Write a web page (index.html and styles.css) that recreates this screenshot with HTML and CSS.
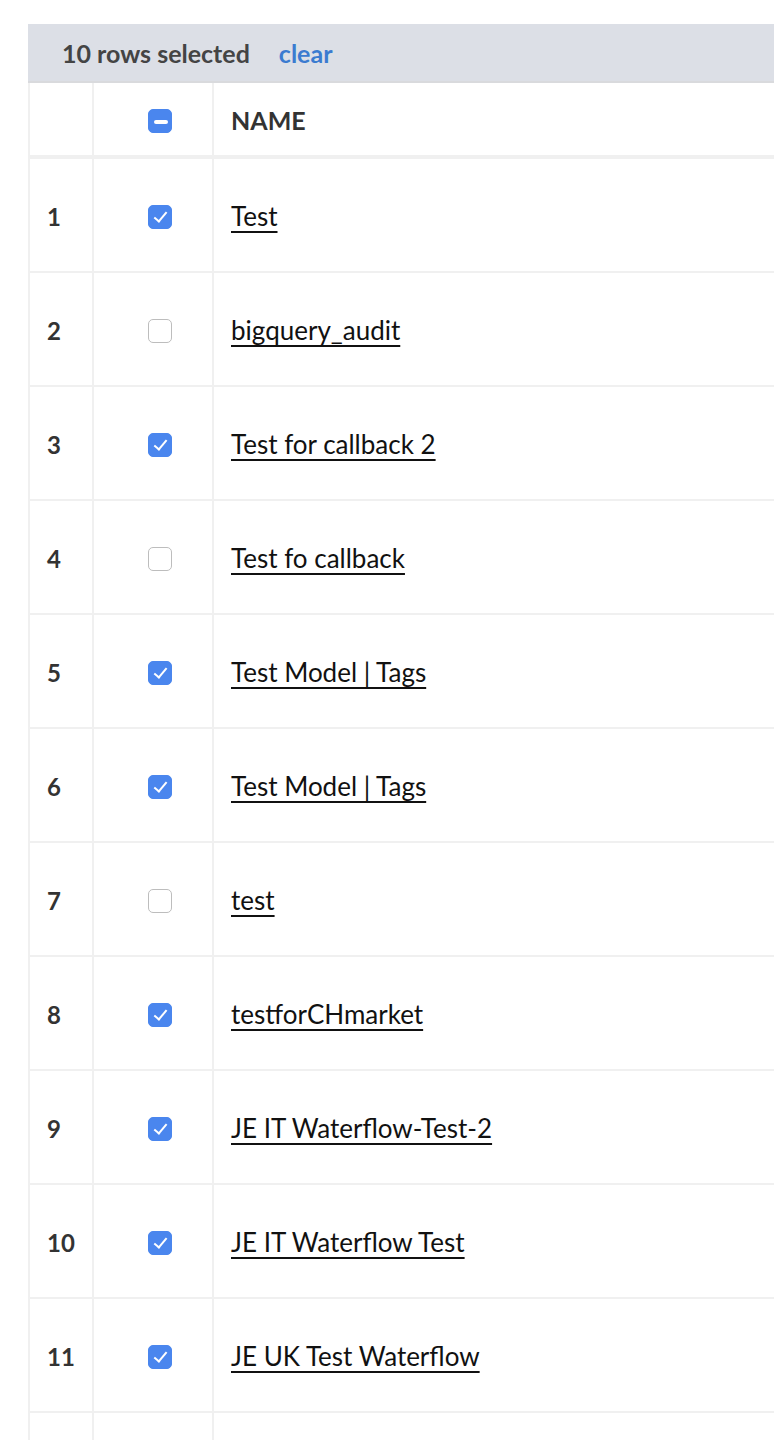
FILE: index.html
```html
<!DOCTYPE html>
<html>
<head>
<meta charset="utf-8">
<link rel="stylesheet" href="styles.css">
</head>
<body>
<div class="wrap">
  <div class="bar">
    <span class="count">10 rows selected</span>
    <a class="clear">clear</a>
  </div>
  <div class="table">
    <div class="row head">
      <div class="c num"></div>
      <div class="c chk"><span class="box partial"></span></div>
      <div class="c name"><span class="th">NAME</span></div>
    </div>
    <div class="row"><div class="c num">1</div><div class="c chk"><span class="box on"></span></div><div class="c name"><a>Test</a></div></div>
    <div class="row"><div class="c num">2</div><div class="c chk"><span class="box"></span></div><div class="c name"><a>bigquery_audit</a></div></div>
    <div class="row"><div class="c num">3</div><div class="c chk"><span class="box on"></span></div><div class="c name"><a>Test for callback 2</a></div></div>
    <div class="row"><div class="c num">4</div><div class="c chk"><span class="box"></span></div><div class="c name"><a>Test fo callback</a></div></div>
    <div class="row"><div class="c num">5</div><div class="c chk"><span class="box on"></span></div><div class="c name"><a>Test Model | Tags</a></div></div>
    <div class="row"><div class="c num">6</div><div class="c chk"><span class="box on"></span></div><div class="c name"><a>Test Model | Tags</a></div></div>
    <div class="row"><div class="c num">7</div><div class="c chk"><span class="box"></span></div><div class="c name"><a>test</a></div></div>
    <div class="row"><div class="c num">8</div><div class="c chk"><span class="box on"></span></div><div class="c name"><a>testforCHmarket</a></div></div>
    <div class="row"><div class="c num">9</div><div class="c chk"><span class="box on"></span></div><div class="c name"><a>JE IT Waterflow-Test-2</a></div></div>
    <div class="row"><div class="c num">10</div><div class="c chk"><span class="box on"></span></div><div class="c name"><a>JE IT Waterflow Test</a></div></div>
    <div class="row"><div class="c num">11</div><div class="c chk"><span class="box on"></span></div><div class="c name"><a>JE UK Test Waterflow</a></div></div>
    <div class="row"><div class="c num"></div><div class="c chk"></div><div class="c name"></div></div>
  </div>
</div>
</body>
</html>
```
FILE: styles.css
```css
html, body {
  margin: 0;
  padding: 0;
  overflow: hidden;
  background: #fff;
}
body {
  font-family: Lato, "Liberation Sans", sans-serif;
  color: #333;
}
.wrap {
  margin: 24px 0 0 28px;
  width: 1000px;
}
.bar {
  height: 57px;
  background: #dcdfe6;
  border-bottom: 2px solid #d9dadd;
  display: flex;
  align-items: center;
  padding-left: 34px;
  gap: 29px;
  font-size: 25px;
  font-weight: 700;
}
.count { color: #444; }
.clear { color: #3b7bd0; cursor: pointer; }
.table {
  border-left: 2px solid #f0f0f0;
}
.row {
  display: flex;
  height: 112px;
  border-bottom: 2px solid #f0f0f0;
}
.row.head {
  height: 72px;
  border-bottom-width: 4px;
}
.c {
  display: flex;
  align-items: center;
  border-right: 2px solid #f0f0f0;
}
.num {
  width: 45px;
  padding-left: 17px;
  padding-top: 2px;
  font-weight: 700;
  font-size: 24px;
  color: #333;
}
.chk {
  width: 64px;
  padding-left: 54px;
  padding-top: 4px;
}
.name {
  flex: 1;
  padding-left: 17px;
  padding-top: 2px;
  border-right: none;
  font-size: 26px;
}
.th {
  font-weight: 700;
  font-size: 25px;
  color: #333;
}
.name a {
  color: #111;
  text-decoration: underline;
  text-underline-offset: 5px;
  text-decoration-thickness: 2px;
}
.box {
  box-sizing: border-box;
  width: 24px;
  height: 24px;
  border-radius: 5px;
  border: 1.5px solid #bdbdbd;
  background: #fff;
  position: relative;
}
.box.on, .box.partial {
  background: #4a86ee;
  border-color: #4a86ee;
}
.box.on::after {
  content: "";
  position: absolute;
  left: 7.5px;
  top: 3px;
  width: 5px;
  height: 11px;
  border: solid #fff;
  border-width: 0 2.5px 2.5px 0;
  transform: rotate(40deg);
}
.box.partial::after {
  content: "";
  position: absolute;
  left: 5px;
  top: 9.5px;
  width: 14px;
  height: 4px;
  border-radius: 2px;
  background: #fff;
}
```
